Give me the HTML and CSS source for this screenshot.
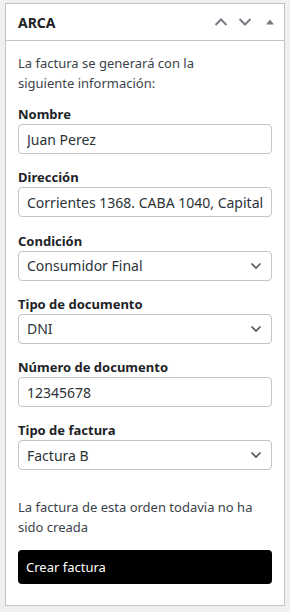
FILE: index.html
```html
<!DOCTYPE html>
<html lang="es">
  <head>
    <meta charset="UTF-8" />
    <meta name="viewport" content="width=device-width, initial-scale=1.0" />
    <title>ARCA</title>
    <link rel="stylesheet" href="styles.css">
  </head>
  <body>
    <div class="postbox">
      <div class="postbox-header">
        <h2>ARCA</h2>
        <div class="handle-actions">
          <button class="handle" aria-label="Mover arriba">
            <svg width="14" height="10" viewBox="0 0 14 10"><path d="M1.5 8 L7 2.5 L12.5 8" fill="none" stroke="#787c82" stroke-width="2"/></svg>
          </button>
          <button class="handle" aria-label="Mover abajo">
            <svg width="14" height="10" viewBox="0 0 14 10"><path d="M1.5 2 L7 7.5 L12.5 2" fill="none" stroke="#787c82" stroke-width="2"/></svg>
          </button>
          <button class="handle toggle" aria-label="Contraer">
            <svg width="10" height="8" viewBox="0 0 10 8"><path d="M1 6.5 L5 1.5 L9 6.5 Z" fill="#787c82"/></svg>
          </button>
        </div>
      </div>

      <div class="inside">
        <p class="intro">La factura se generará con la<br>siguiente información:</p>

        <div class="field">
          <label for="nombre">Nombre</label>
          <input type="text" id="nombre" value="Juan Perez" />
        </div>

        <div class="field">
          <label for="direccion">Dirección</label>
          <input type="text" id="direccion" value="Corrientes 1368. CABA 1040, Capital Federal" />
        </div>

        <div class="field">
          <label for="condicion">Condición</label>
          <div class="select-wrap">
            <select id="condicion">
              <option>Consumidor Final</option>
            </select>
            <svg class="caret" width="12" height="8" viewBox="0 0 12 8"><path d="M1.5 1.5 L6 6 L10.5 1.5" fill="none" stroke="#50575e" stroke-width="1.6"/></svg>
          </div>
        </div>

        <div class="field">
          <label for="tipo-doc">Tipo de documento</label>
          <div class="select-wrap">
            <select id="tipo-doc">
              <option>DNI</option>
            </select>
            <svg class="caret" width="12" height="8" viewBox="0 0 12 8"><path d="M1.5 1.5 L6 6 L10.5 1.5" fill="none" stroke="#50575e" stroke-width="1.6"/></svg>
          </div>
        </div>

        <div class="field">
          <label for="numero-doc">Número de documento</label>
          <input type="text" id="numero-doc" value="12345678" />
        </div>

        <div class="field">
          <label for="tipo-factura">Tipo de factura</label>
          <div class="select-wrap">
            <select id="tipo-factura">
              <option>Factura B</option>
            </select>
            <svg class="caret" width="12" height="8" viewBox="0 0 12 8"><path d="M1.5 1.5 L6 6 L10.5 1.5" fill="none" stroke="#50575e" stroke-width="1.6"/></svg>
          </div>
        </div>

        <p class="status">La factura de esta orden todavia no ha sido creada</p>

        <button class="create">Crear factura</button>
      </div>
    </div>
  </body>
</html>
```

FILE: styles.css
```css
body {
  margin: 0;
  padding: 3px 5px;
  background-color: #f0f0f1;
  font-family: "Noto Sans", sans-serif;
  color: #3c434a;
}

.postbox {
  background-color: #fff;
  border: 1px solid #c3c4c7;
}

.postbox-header {
  display: flex;
  align-items: center;
  justify-content: space-between;
  height: 36px;
  border-bottom: 1px solid #c3c4c7;
  padding: 0 0 0 12px;
}

.postbox-header h2 {
  margin: 0;
  font-size: 14px;
  font-weight: 700;
  color: #1d2327;
}

.handle-actions {
  display: flex;
  align-items: center;
  margin-right: 1px;
}

.handle {
  display: flex;
  align-items: center;
  justify-content: center;
  width: 24px;
  height: 30px;
  padding: 0;
  border: none;
  background: none;
}

.handle.toggle {
  width: 26px;
}

.inside {
  padding: 12px 12px 21px;
}

.intro,
.status {
  margin: 0;
  font-size: 13px;
  line-height: 20px;
}

.intro {
  margin-bottom: 11px;
}

.field {
  margin-bottom: 13.3px;
}

.field label {
  display: block;
  font-size: 13px;
  font-weight: 700;
  line-height: 20px;
  color: #1d2327;
}

.field input,
.field select {
  display: block;
  box-sizing: border-box;
  width: 100%;
  height: 30px;
  margin: 0;
  padding: 0 8px;
  border: 1px solid #c3c4c7;
  border-radius: 4px;
  background: #fff;
  font-family: "Noto Sans", sans-serif;
  font-size: 14px;
  color: #2c3338;
  outline: none;
}

.field select {
  appearance: none;
  -webkit-appearance: none;
}

.select-wrap {
  position: relative;
}

.select-wrap .caret {
  position: absolute;
  right: 10px;
  top: 11px;
  pointer-events: none;
}

.status {
  margin-top: 27px;
  margin-bottom: 13px;
}

.create {
  display: block;
  width: 100%;
  height: 34px;
  padding: 0 8px;
  border: none;
  border-radius: 4px;
  background-color: #000;
  color: #fff;
  font-family: "Noto Sans", sans-serif;
  font-size: 13px;
  text-align: left;
}
```
